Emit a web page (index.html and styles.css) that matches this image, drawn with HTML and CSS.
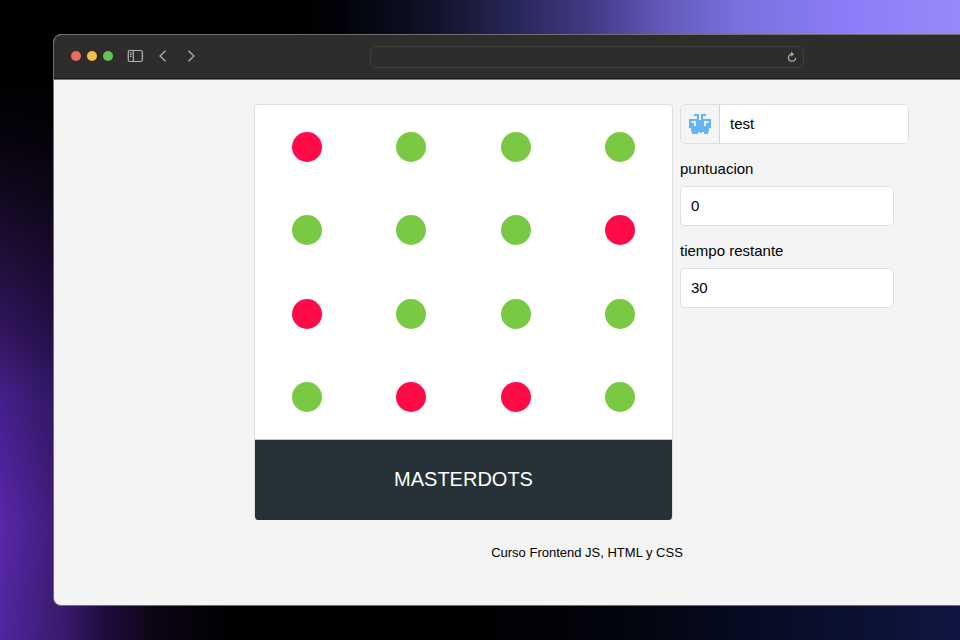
FILE: index.html
```html
<!DOCTYPE html>
<html lang="es">
<head>
<meta charset="utf-8">
<meta name="viewport" content="width=device-width, initial-scale=1">
<title>Masterdots</title>
<link rel="stylesheet" href="styles.css">
</head>
<body>
<div class="window">
  <header class="toolbar">
    <div class="lights">
      <span class="light light-close"></span>
      <span class="light light-min"></span>
      <span class="light light-max"></span>
    </div>
    <nav class="tools">
      <button class="tool" type="button" aria-label="Barra lateral">
        <svg width="16" height="16" viewBox="0 0 16 16"><rect x="1.300" y="2.500" width="14" height="11" rx="1.500"/><path d="M6.300 2.500v11M2.900 4.900h1.700M2.900 6.700h1.700M2.900 8.500h1.700"/></svg>
      </button>
      <button class="tool" type="button" aria-label="Atrás">
        <svg width="16" height="16" viewBox="0 0 16 16"><path d="M10.500 2.800L5 8l5.500 5.200"/></svg>
      </button>
      <button class="tool" type="button" aria-label="Adelante">
        <svg width="16" height="16" viewBox="0 0 16 16"><path d="M5.500 2.800L11 8l-5.500 5.200"/></svg>
      </button>
    </nav>
    <div class="address">
      <input class="address-input" type="text" aria-label="Dirección">
      <button class="reload" type="button" aria-label="Recargar">
        <svg width="10" height="10" viewBox="0 0 10 10"><path d="M5 2.200A3.500 3.500 0 1 0 8.500 5.700M4.200 .3L6 2.200L4.200 4.100"/></svg>
      </button>
    </div>
  </header>
  <main class="page">
    <div class="game">
      <section class="card">
        <div class="board">
          <button class="dot red" type="button" aria-label="Rojo"></button>
          <button class="dot" type="button" aria-label="Verde"></button>
          <button class="dot" type="button" aria-label="Verde"></button>
          <button class="dot" type="button" aria-label="Verde"></button>
          <button class="dot" type="button" aria-label="Verde"></button>
          <button class="dot" type="button" aria-label="Verde"></button>
          <button class="dot" type="button" aria-label="Verde"></button>
          <button class="dot red" type="button" aria-label="Rojo"></button>
          <button class="dot red" type="button" aria-label="Rojo"></button>
          <button class="dot" type="button" aria-label="Verde"></button>
          <button class="dot" type="button" aria-label="Verde"></button>
          <button class="dot" type="button" aria-label="Verde"></button>
          <button class="dot" type="button" aria-label="Verde"></button>
          <button class="dot red" type="button" aria-label="Rojo"></button>
          <button class="dot red" type="button" aria-label="Rojo"></button>
          <button class="dot" type="button" aria-label="Verde"></button>
        </div>
        <h1 class="title">MASTERDOTS</h1>
      </section>
      <form class="panel">
        <div class="player">
          <span class="avatar">
            <svg width="22" height="20" viewBox="0 0 22 20"><path fill="#64b5f6" fill-rule="evenodd" d="M5 0h5v6h2V0h5v2h-3v3h8v9h-2v4h-1v2h-4v-2h-2v1h-2v-1H9v2H3v-2H2v-4H0V5h8V2H5zM2.500 7v2H5v3h2V7zM15 7v5h2V9h2.500V7z"/></svg>
          </span>
          <input class="field" type="text" value="test" aria-label="Jugador">
        </div>
        <label class="label" for="score">puntuacion</label>
        <input class="field boxed" id="score" type="text" value="0">
        <label class="label" for="time">tiempo restante</label>
        <input class="field boxed" id="time" type="text" value="30">
      </form>
    </div>
    <footer class="footer">Curso Frontend JS, HTML y CSS</footer>
  </main>
</div>
</body>
</html>
```

FILE: styles.css
```css
* {
  box-sizing: border-box;
}

body {
  margin: 0;
  min-height: 100vh;
  padding: 34px 0 34px 53px;
  display: flex;
  overflow: hidden;
  font-family: "Liberation Sans", Arial, sans-serif;
  color: #000;
  background:
    linear-gradient(to right, transparent, rgba(0, 0, 0, 0.3)) left / 60px 100% no-repeat,
    linear-gradient(to bottom, #000 12%, #07030d 22%, #150a25 33%, #241043 43%, #32155f 52%, #43208a 62%, #4c2296 70%, #5728a8 82%, #50269c 100%) left / 60px 100% no-repeat,
    linear-gradient(to right, #000 31%, #02030a 36%, #101228 45%, #28275a 54%, #443c88 62%, #6259b8 69%, #7a70df 77%, #8b7df8 88%, #9888fb 100%) top / 100% 60px no-repeat,
    linear-gradient(to right, #3c1b74 6%, #32165f 8%, #1f0b3c 11%, #0d0515 16%, #000 24%, #000 48%, #03050f 66%, #080d28 82%, #101641 100%) bottom / 100% 60px no-repeat,
    #000;
}

.window {
  flex: 1 0 auto;
  width: 100%;
  margin-right: -161px;
  display: flex;
  flex-direction: column;
  border: 1px solid #706f6e;
  border-radius: 8px;
  overflow: hidden;
  background: #f4f4f4;
}

.toolbar {
  display: grid;
  grid-template-columns: 1fr 434px 1fr;
  align-items: center;
  height: 45px;
  border-bottom: 1px solid #777;
  background: #2f2d2b;
  box-shadow: inset 0 -1px #191817;
}

.lights {
  grid-area: 1 / 1;
  display: flex;
  gap: 6px;
  padding: 0 0 2px 17px;
}

.light {
  width: 10px;
  height: 10px;
  border-radius: 50%;
}

.light-close { background: #ed6a5e; }
.light-min { background: #f5bf4f; }
.light-max { background: #61c554; }

.tools {
  grid-area: 1 / 1;
  display: flex;
  gap: 12px;
  padding: 0 0 2px 73px;
  justify-self: start;
}

.tool,
.reload {
  padding: 0;
  border: 0;
  display: flex;
  background: none;
}

.tool svg,
.reload svg {
  fill: none;
  stroke: #b5b4b3;
  stroke-width: 1.2;
}

.address {
  grid-column: 2;
  display: flex;
  align-items: center;
  height: 22px;
  padding-right: 6px;
  border: 1px solid #403f3d;
  border-radius: 6px;
}

.address-input {
  flex: 1;
  min-width: 0;
  border: 0;
  outline: 0;
  color: #ddd;
  background: none;
}

.page {
  flex: 1;
  padding: 24px 200px;
}

.game {
  display: flex;
  align-items: flex-start;
  gap: 7px;
}

.card {
  flex: 0 0 419px;
  border: 1px solid #dce0e4;
  border-bottom: 0;
  border-radius: 4px;
  overflow: hidden;
  background: #fff;
}

.board {
  display: grid;
  grid-template-columns: repeat(4, 1fr);
  grid-template-rows: repeat(4, 1fr);
  place-items: center;
  height: 334px;
}

.dot {
  width: 30px;
  height: 30px;
  padding: 0;
  border: 0;
  border-radius: 50%;
  background: #7ac943;
}

.dot.red {
  background: #ff0c48;
}

.title {
  margin: 0;
  padding-bottom: 2px;
  border-top: 1px solid #b8c4c8;
  font-size: 20px;
  font-weight: 400;
  line-height: 78px;
  text-align: center;
  color: #fff;
  background: #273238;
}

.panel {
  display: flex;
  flex-direction: column;
  align-items: flex-start;
  min-width: 229px;
}

.player {
  display: flex;
  width: 229px;
  height: 40px;
  margin-bottom: 16px;
  border: 1px solid #dce0e4;
  border-radius: 5px;
  overflow: hidden;
}

.avatar {
  flex: 0 0 39px;
  display: flex;
  align-items: center;
  justify-content: center;
  border-right: 1px solid #d0d5da;
}

.field {
  flex: 1;
  min-width: 0;
  padding: 0 10px 2px;
  border: 0;
  font: 15px "Liberation Sans", Arial, sans-serif;
  color: #000;
  background: #fff;
}

.field.boxed {
  flex: 0 0 40px;
  width: 214px;
  margin-bottom: 16px;
  border: 1px solid #dce0e4;
  border-radius: 5px;
}

.label {
  margin-bottom: 8px;
  font-size: 15px;
  line-height: 18px;
}

.footer {
  margin-top: 24px;
  font-size: 13px;
  line-height: 18px;
  text-align: center;
}
```
